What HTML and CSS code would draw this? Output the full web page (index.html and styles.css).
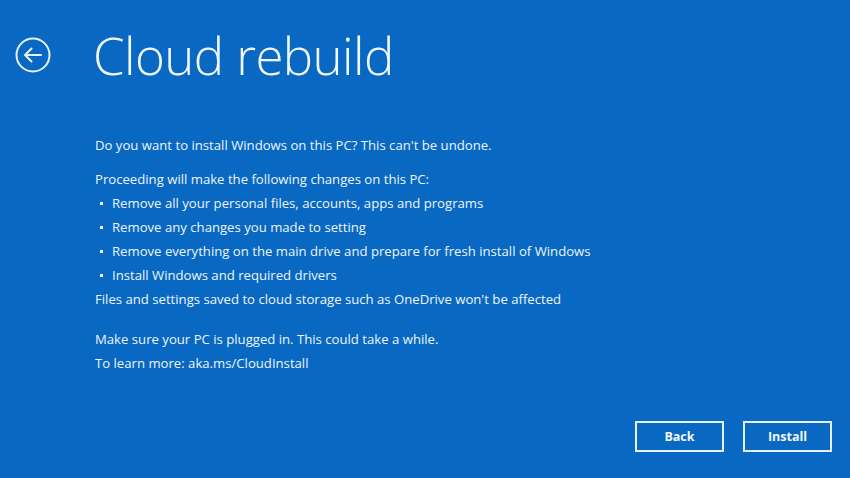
FILE: index.html
```html
<!DOCTYPE html>
<html>
<head>
<meta charset="utf-8">
<link rel="stylesheet" href="styles.css">
</head>
<body>
<div class="page">
  <header class="head">
    <svg class="back" width="38" height="38" viewBox="0 0 38 38">
      <circle cx="19" cy="19" r="16.5" fill="none" stroke="#e8f2fb" stroke-width="2"/>
      <path d="M27 19 H11 M17.5 12.5 L11 19 L17.5 25.5" fill="none" stroke="#e8f2fb" stroke-width="2" stroke-linecap="round" stroke-linejoin="round"/>
    </svg>
    <h1 class="title">Cloud rebuild</h1>
  </header>
  <main class="body">
    <p class="line q">Do you want to install Windows on this PC? This can't be undone.</p>
    <p class="line">Proceeding will make the following changes on this PC:</p>
    <ul class="list">
      <li>Remove all your personal files, accounts, apps and programs</li>
      <li>Remove any changes you made to setting</li>
      <li>Remove everything on the main drive and prepare for fresh install of Windows</li>
      <li>Install Windows and required drivers</li>
    </ul>
    <p class="line">Files and settings saved to cloud storage such as OneDrive won't be affected</p>
    <p class="line gap">Make sure your PC is plugged in. This could take a while.</p>
    <p class="line">To learn more: aka.ms/CloudInstall</p>
  </main>
  <footer class="foot">
    <button class="btn">Back</button>
    <button class="btn">Install</button>
  </footer>
</div>
</body>
</html>
```
FILE: styles.css
```css
html, body {
  margin: 0;
  padding: 0;
}
body {
  width: 850px;
  height: 478px;
  background: #0968c2;
  color: #eef5fc;
  font-family: "Open Sans", "Noto Sans", sans-serif;
  overflow: hidden;
}
.page {
  width: 850px;
  height: 478px;
  display: flex;
  flex-direction: column;
  box-sizing: border-box;
}
.head {
  display: flex;
  align-items: center;
  padding: 23px 0 0 14px;
  height: 64px;
}
.back {
  display: block;
  flex: none;
}
.title {
  margin: 0 0 0 41px;
  font-weight: 300;
  font-size: 51px;
  letter-spacing: -0.6px;
  line-height: 64px;
  color: #f2f8fe;
}
.body {
  padding: 46px 0 0 95px;
  font-size: 13.15px;
}
.line {
  margin: 0;
  height: 24px;
  line-height: 24px;
}
.q {
  margin-bottom: 10px;
}
.gap {
  margin-top: 16px;
}
.list {
  margin: 0;
  padding: 0;
  list-style: none;
}
.list li {
  height: 24px;
  line-height: 24px;
  position: relative;
  padding-left: 17px;
}
.list li::before {
  content: "";
  position: absolute;
  left: 5px;
  top: 11px;
  width: 3px;
  height: 3px;
  background: #eef5fc;
}
.foot {
  margin-top: auto;
  display: flex;
  justify-content: flex-end;
  gap: 19px;
  padding: 0 18px 26px 0;
}
.btn {
  width: 89px;
  height: 31px;
  box-sizing: border-box;
  background: transparent;
  border: 2px solid #e6f0fa;
  color: #f2f8fe;
  font-family: "Open Sans", "Noto Sans", sans-serif;
  font-weight: 700;
  font-size: 12.5px;
  padding: 0;
}
```
